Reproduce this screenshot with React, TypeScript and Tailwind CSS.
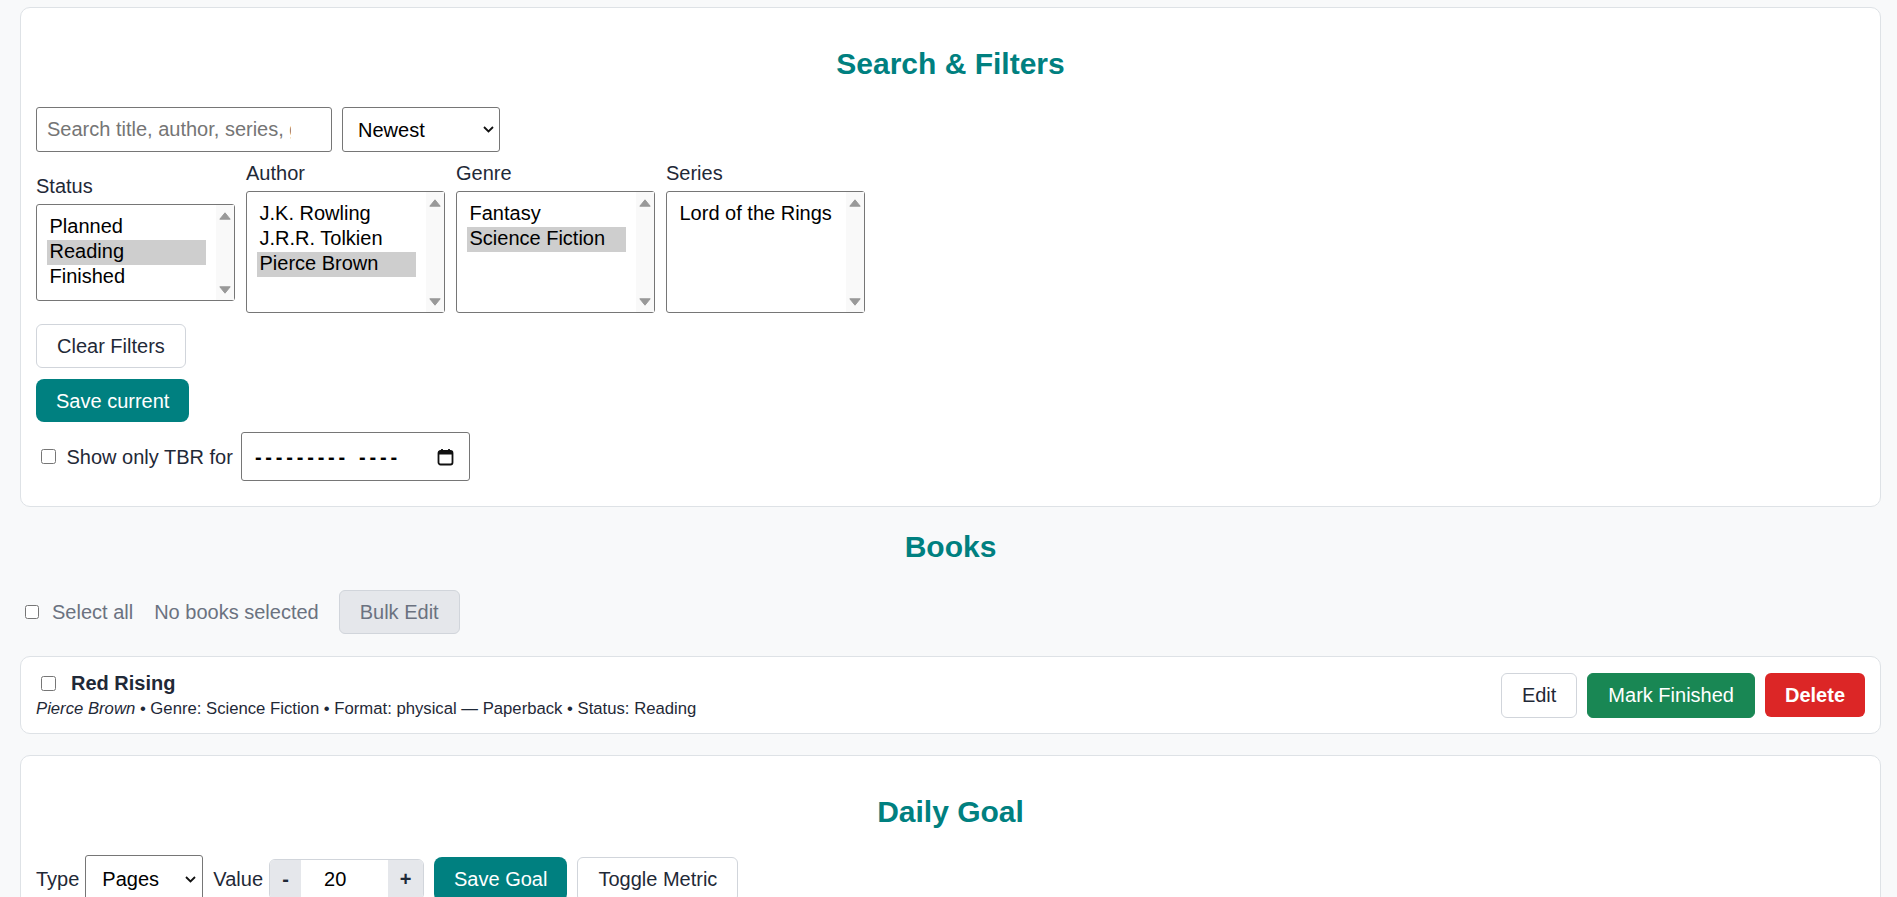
import React, { useState } from 'react';

const STATUSES = ['Planned', 'Reading', 'Finished'];
const AUTHORS = ['J.K. Rowling', 'J.R.R. Tolkien', 'Pierce Brown'];
const GENRES = ['Fantasy', 'Science Fiction'];
const SERIES = ['Lord of the Rings'];

const Chevron = () => (
  <svg width="11" height="7" viewBox="0 0 11 7" fill="none">
    <path d="M1 1l4.5 4.5L10 1" stroke="#111" strokeWidth="1.8" />
  </svg>
);

const ArrowUp = () => (
  <svg width="12" height="8" viewBox="0 0 12 8">
    <path d="M6 0.8L11.2 7.2H0.8z" fill="#999" strokeLinejoin="round" stroke="#999" />
  </svg>
);

const ArrowDown = () => (
  <svg width="12" height="8" viewBox="0 0 12 8">
    <path d="M0.8 0.8H11.2L6 7.2z" fill="#999" strokeLinejoin="round" stroke="#999" />
  </svg>
);

const CalendarIcon = () => (
  <svg width="17" height="18" viewBox="0 0 17 18" fill="none">
    <rect x="1.5" y="3" width="14" height="13.5" rx="2" stroke="#111" strokeWidth="1.8" />
    <rect x="1.5" y="3" width="14" height="3.5" fill="#111" />
    <path d="M5 1v3M12 1v3" stroke="#111" strokeWidth="1.8" />
  </svg>
);

interface ListBoxProps {
  label: string;
  options: string[];
  selected: string[];
  onToggle: (v: string) => void;
  short?: boolean;
}

const ListBox: React.FC<ListBoxProps> = ({ label, options, selected, onToggle, short }) => (
  <div className="flex flex-col">
    <label className="text-[20px] leading-[23px] mb-[6px] text-[#1f2937]">{label}</label>
    <div className={`flex w-[199px] ${short ? 'h-[97px]' : 'h-[122px]'} border border-[#767676] rounded-[3px] bg-white`}>
      <div className="flex-1 p-[10px]">
        {options.map(o => (
          <div
            key={o}
            onClick={() => onToggle(o)}
            className={`h-[25px] leading-[23px] px-[2.5px] text-[20px] text-black cursor-default ${selected.includes(o) ? 'bg-[#cecece]' : ''}`}
          >
            {o}
          </div>
        ))}
      </div>
      <div className="w-[18px] bg-[#f9f9f9] flex flex-col items-center justify-between pt-[7px] pb-[6px]">
        <ArrowUp />
        <ArrowDown />
      </div>
    </div>
  </div>
);

export default function App() {
  const [status, setStatus] = useState<string[]>(['Reading']);
  const [authors, setAuthors] = useState<string[]>(['Pierce Brown']);
  const [genres, setGenres] = useState<string[]>(['Science Fiction']);
  const [series, setSeries] = useState<string[]>([]);
  const [goal, setGoal] = useState(20);

  const toggle = (list: string[], set: React.Dispatch<React.SetStateAction<string[]>>) => (v: string) =>
    set(list.includes(v) ? list.filter(x => x !== v) : [...list, v]);

  return (
    <div className="min-h-screen bg-[#f8f9fa] pt-[7px] pl-5 pr-4 pb-10 font-['Liberation_Sans',Arial,sans-serif] text-[#1f2937]">
      {/* search & filters */}
      <section className="bg-white border border-[#dee2e6] rounded-[10px] px-[15px] pt-[15px] pb-[25px]">
        <h2 className="mt-[23px] mb-[26px] text-center text-[30px] leading-[35px] font-bold text-[#008080]">Search &amp; Filters</h2>

        <div className="flex gap-[10px]">
          <input
            type="text"
            placeholder="Search title, author, series, genre"
            className="w-[296px] h-[45px] border border-[#767676] rounded-[3px] pl-[10px] pr-[40px] text-[20px] placeholder:text-[#757575] outline-none"
          />
          <div className="w-[158px] h-[45px] border border-[#767676] rounded-[3px] flex items-center justify-between pl-[15px] pr-[5px] text-[20px] text-black bg-white">
            <span>Newest</span>
            <Chevron />
          </div>
        </div>

        <div className="flex items-center gap-[11px] mt-[10px]">
          <ListBox label="Status" options={STATUSES} selected={status} onToggle={toggle(status, setStatus)} short />
          <ListBox label="Author" options={AUTHORS} selected={authors} onToggle={toggle(authors, setAuthors)} />
          <ListBox label="Genre" options={GENRES} selected={genres} onToggle={toggle(genres, setGenres)} />
          <ListBox label="Series" options={SERIES} selected={series} onToggle={toggle(series, setSeries)} />
        </div>

        <button
          onClick={() => { setStatus([]); setAuthors([]); setGenres([]); setSeries([]); }}
          className="block mt-[11px] h-[44px] px-5 border border-[#d1d5db] rounded-[6px] bg-white text-[20px] text-[#1f2937]"
        >
          Clear Filters
        </button>
        <button className="block mt-[11px] h-[43px] px-5 rounded-[8px] bg-[#008080] text-[20px] text-white">
          Save current
        </button>

        <div className="flex items-center mt-[10px]">
          <input type="checkbox" className="ml-[4.5px] w-[15px] h-[15px]" />
          <span className="ml-[11px] text-[20px]">Show only TBR for</span>
          <div className="ml-[8px] w-[229px] h-[49px] border border-[#767676] rounded-[3px] flex items-center justify-between pl-[13px] pr-[15px]">
            <span className="text-[20px] text-black font-bold tracking-[3.8px]">
              ---------<span className="ml-[10px]">----</span>
            </span>
            <CalendarIcon />
          </div>
        </div>
      </section>

      {/* books */}
      <h2 className="mt-[22px] mb-[26px] text-center text-[30px] leading-[35px] font-bold text-[#008080]">Books</h2>

      <div className="flex items-center h-[44px]">
        <input type="checkbox" className="ml-[5px] w-[14px] h-[14px]" />
        <span className="ml-[13px] text-[20px] text-[#6b7280]">Select all</span>
        <span className="ml-[21px] text-[20px] text-[#6b7280]">No books selected</span>
        <button disabled className="ml-[20px] h-[44px] px-5 border border-[#d1d5db] rounded-[6px] bg-[#e5e7eb] text-[20px] text-[#6b7280]">
          Bulk Edit
        </button>
      </div>

      <div className="mt-[22px] bg-white border border-[#dee2e6] rounded-[10px] px-[15px] py-[15px] flex items-center justify-between">
        <div className="flex flex-col">
          <div className="flex items-center h-[23px]">
            <input type="checkbox" className="ml-[5px] w-[15px] h-[15px]" />
            <span className="ml-[15px] text-[20px] leading-[23px] font-bold text-[#1f2937]">Red Rising</span>
          </div>
          <div className="mt-[4px] text-[16.7px] leading-[19px] text-[#1f2937]">
            <i>Pierce Brown</i> • Genre: Science Fiction • Format: physical — Paperback • Status: Reading
          </div>
        </div>
        <div className="flex items-center gap-[10px]">
          <button className="h-[45px] px-5 border border-[#d1d5db] rounded-[6px] bg-white text-[20px] text-[#1f2937]">Edit</button>
          <button className="h-[45px] px-5 border border-[#198754] rounded-[6px] bg-[#198754] text-[20px] text-white">Mark Finished</button>
          <button className="h-[44px] px-5 rounded-[6px] bg-[#dc2626] text-[20px] font-bold text-white">Delete</button>
        </div>
      </div>

      {/* daily goal */}
      <section className="mt-[21px] bg-white border border-[#dee2e6] rounded-[10px] px-[15px] pt-[15px] pb-[25px]">
        <h2 className="mt-[23px] mb-[26px] text-center text-[30px] leading-[35px] font-bold text-[#008080]">Daily Goal</h2>
        <div className="flex items-center gap-[10px] text-[20px]">
          <label className="flex items-center gap-[6px]">
            Type
            <div className="w-[118px] h-[48px] border border-[#767676] rounded-[3px] flex items-center justify-between pl-[16px] pr-[6px] text-black bg-white">
              <span>Pages</span>
              <Chevron />
            </div>
          </label>
          <label className="flex items-center gap-[6px]">
            Value
            <div className="flex h-[41px] w-[155px] border border-[#d1d5db] rounded-[6px] overflow-hidden">
              <button onClick={() => setGoal(goal - 1)} className="w-[31px] bg-[#e5e7eb] font-bold text-[#1f2937]">-</button>
              <span className="flex-1 flex items-center pl-[23px] text-black bg-white">{goal}</span>
              <button onClick={() => setGoal(goal + 1)} className="w-[35px] bg-[#e5e7eb] font-bold text-[#1f2937]">+</button>
            </div>
          </label>
          <button className="h-[45px] px-5 rounded-[8px] bg-[#008080] text-white">Save Goal</button>
          <button className="h-[45px] px-5 border border-[#d1d5db] rounded-[6px] bg-white text-[#1f2937]">Toggle Metric</button>
        </div>
      </section>
    </div>
  );
}
